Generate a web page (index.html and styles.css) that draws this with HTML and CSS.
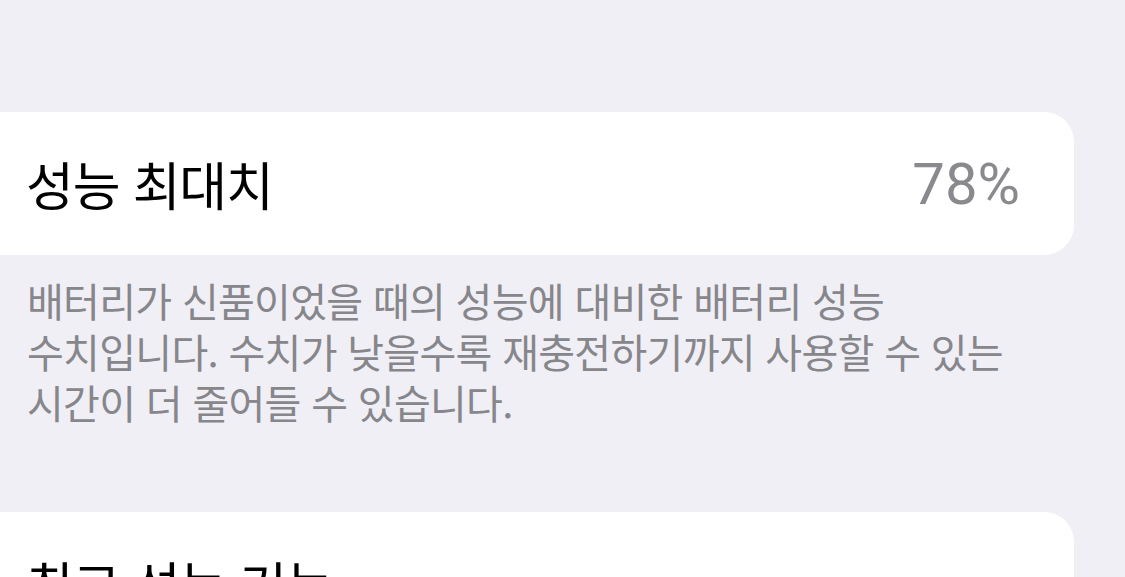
FILE: index.html
```html
<!DOCTYPE html>
<html lang="ko">
<head>
    <meta charset="UTF-8">
    <title>배터리 성능 상태</title>
    <link rel="stylesheet" href="styles.css">
</head>
<body>

<div class="settings">
    <div class="cell">
        <span class="cell-title">성능 최대치</span>
        <span class="cell-value">78%</span>
    </div>
    <p class="footnote">배터리가 신품이었을 때의 성능에 대비한 배터리 성능<br>수치입니다. 수치가 낮을수록 재충전하기까지 사용할 수 있는<br>시간이 더 줄어들 수 있습니다.</p>

    <div class="cell">
        <span class="cell-title">최고 성능 기능</span>
    </div>
</div>

</body>
</html>
```

FILE: styles.css
```css
body, html {
    margin: 0;
    padding: 0;
    background: #f0eff5;
    font-family: "Noto Sans CJK KR", "Noto Sans", sans-serif;
    overflow: hidden;
}

.settings {
    padding-top: 112px;
}

.cell {
    display: flex;
    align-items: center;
    justify-content: space-between;
    width: 1106px;
    height: 143px;
    margin-left: -32px;
    padding: 0 54px 0 58px;
    box-sizing: border-box;
    background: #ffffff;
    border-radius: 30px;
}

.cell-title {
    font-size: 52px;
    letter-spacing: -1.2px;
    color: #000000;
}

.cell-value {
    font-family: Roboto, "Liberation Sans", sans-serif;
    font-size: 58px;
    color: #8a8a8e;
}

.footnote {
    margin: 20px 0 0 27px;
    font-size: 40px;
    line-height: 51px;
    letter-spacing: -0.7px;
    color: #86868b;
}

.footnote + .cell {
    margin-top: 84px;
}
```
